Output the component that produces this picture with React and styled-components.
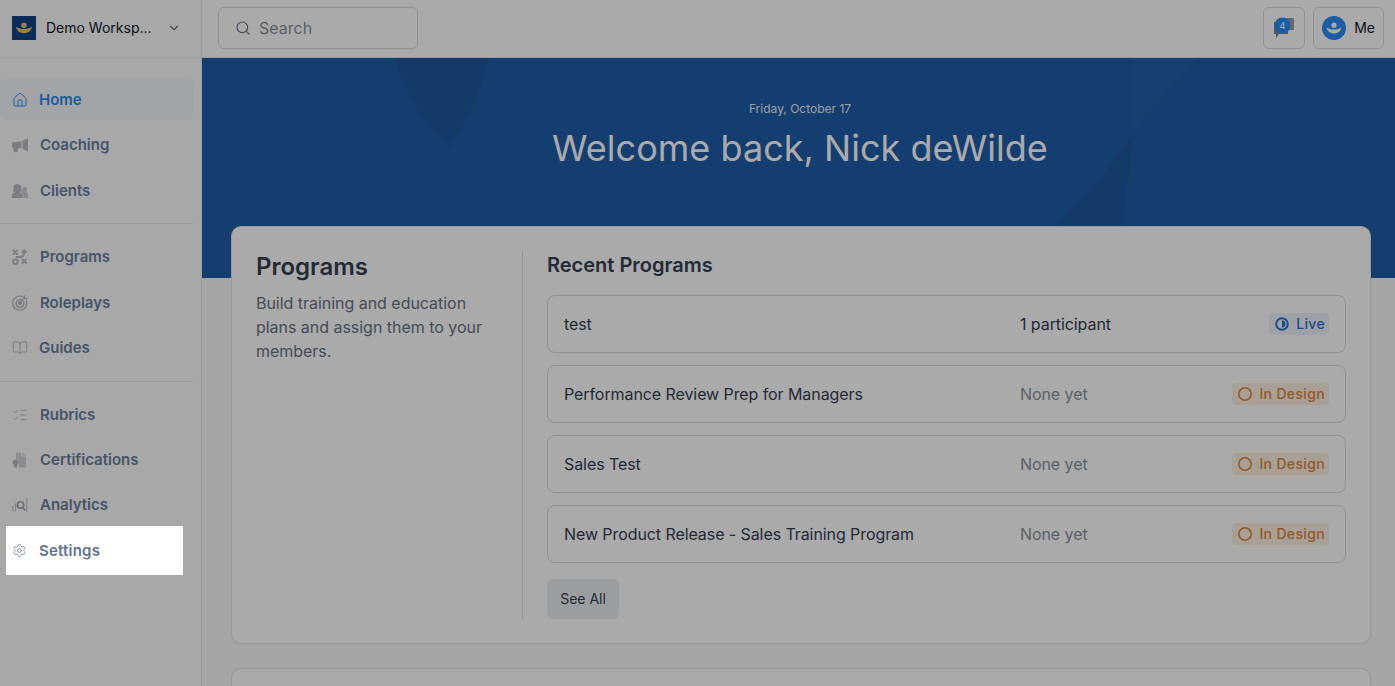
import styled, { createGlobalStyle } from "styled-components"
import { House, ChevronDown, Search, BookOpen, ListChecks, Settings } from "lucide-react"

const Global = createGlobalStyle`
    html, body { margin:0; padding:0; height:100%; overflow:hidden; background:#f9fafb; }
    body { font-family:"Inter","Liberation Sans",sans-serif; }
    * { box-sizing:border-box; }
`

const Page = styled.div`
    display:flex;
    width:100%;
    height:100vh;
    overflow:hidden;
`

const Sidebar = styled.aside`
    width:202px;
    flex-shrink:0;
    background:#fcfcfc;
    border-right:1px solid #e5e7eb;
    display:flex;
    flex-direction:column;
`

const Workspace = styled.div`
    height:58px;
    flex-shrink:0;
    border-bottom:1px solid #e5e7eb;
    display:flex;
    align-items:center;
    padding:0 20px 2px 12px;
    gap:10px;
    font-size:14px;
    font-weight:400;
    color:#111827;
    span { flex:1; }
    svg.chev { color:#6b7280; }
`

const Nav = styled.nav`
    display:flex;
    flex-direction:column;
    padding-top:19px;
    width:193px;
`

const Group = styled.div`
    display:flex;
    flex-direction:column;
`

const Divider = styled.div`
    height:1px;
    background:#e2e4e8;
    margin:11px 0 ${props => props.$short ? "10px" : "11px"};
`

const NavItem = styled.div`
    height:45px;
    display:flex;
    align-items:center;
    padding-left:12px;
    padding-top:${props => props.$nudge > 0 ? props.$nudge : 0}px;
    padding-bottom:${props => props.$nudge < 0 ? -props.$nudge : 0}px;
    gap:${props => props.$tight ? "11px" : "12px"};
    font-size:15px;
    font-weight:600;
    color:${props => props.$active ? "#278cf0" : "#6a7f9e"};
    position:relative;
    svg { flex-shrink:0; color:${props => props.$active ? "#278cf0" : "#b9bcc0"}; }
    ${props => props.$active && `
        isolation:isolate;
        &::before {
            content:"";
            position:absolute;
            inset:2px 0;
            background:#f5f6f8;
            border-radius:6px;
            z-index:-1;
        }
    `}
`

const SpotlightItem = styled(NavItem)`
    z-index:10;
    margin-top:1px;
    color:#5f7492;
    letter-spacing:0.2px;
    svg { color:#8792a5; }
    &::before {
        content:"";
        position:absolute;
        left:6px;
        right:10px;
        top:-2px;
        bottom:-2px;
        background:#fff;
        box-shadow:0 0 0 3000px rgba(0,0,0,0.333);
        z-index:-1;
    }
`

const Main = styled.main`
    flex:1;
    min-width:0;
    display:flex;
    flex-direction:column;
    overflow:hidden;
    position:relative;
    z-index:0;
`

const Topbar = styled.header`
    height:58px;
    flex-shrink:0;
    background:#fff;
    border-bottom:1px solid #e5e7eb;
    display:flex;
    align-items:center;
    justify-content:space-between;
    padding:0 11px 2px 16px;
`

const SearchBox = styled.div`
    width:200px;
    height:42px;
    border:1px solid #d9dce1;
    border-radius:6px;
    display:flex;
    align-items:center;
    gap:8px;
    padding-left:16px;
    font-size:16px;
    color:#8b919a;
    background:#fff;
    svg { color:#6b7280; }
`

const TopActions = styled.div`
    display:flex;
    gap:8px;
`

const TopButton = styled.div`
    height:42px;
    min-width:42px;
    border:1px solid #d9dce1;
    border-radius:6px;
    display:flex;
    align-items:center;
    justify-content:center;
    gap:8px;
    padding:0 8px;
    font-size:14px;
    font-weight:400;
    color:#111827;
`

const Banner = styled.section`
    height:220px;
    flex-shrink:0;
    background:#1f5ca8;
    position:relative;
    display:flex;
    flex-direction:column;
    align-items:center;
    color:#fff;
    padding:43px 0 0 3px;
`

const BannerArt = styled.svg`
    position:absolute;
    inset:0;
    width:100%;
    height:100%;
`

const DateLine = styled.div`
    position:relative;
    font-size:12px;
    line-height:16px;
    color:#e8edf4;
`

const Title = styled.h1`
    position:relative;
    margin:7px 0 0;
    font-size:36px;
    line-height:48px;
    font-weight:400;
    letter-spacing:0.03px;
`

const Content = styled.div`
    margin-top:-52px;
    padding:0 24px 0 29px;
    display:flex;
    flex-direction:column;
    gap:24px;
    position:relative;
`

const Card = styled.section`
    background:#fff;
    border:1px solid #e2e4e8;
    border-radius:10px;
    box-shadow:0 1px 2px rgba(0,0,0,0.05);
    display:flex;
    padding:24px;
    min-height:${props => props.$empty ? "100px" : "418px"};
`

const Intro = styled.div`
    width:267px;
    flex-shrink:0;
    border-right:1px solid #e2e4e8;
    padding-right:24px;
    h2 {
        margin:0 0 8px;
        font-size:24px;
        line-height:32px;
        font-weight:600;
        color:#374151;
    }
    p {
        margin:0;
        font-size:16px;
        line-height:24px;
        letter-spacing:-0.03px;
        color:#6b7280;
    }
`

const Recent = styled.div`
    flex:1;
    padding-left:24px;
    display:flex;
    flex-direction:column;
    align-items:flex-start;
    h3 {
        margin:0 0 16px;
        font-size:20px;
        line-height:28px;
        font-weight:600;
        color:#374151;
    }
`

const Rows = styled.div`
    width:100%;
    display:flex;
    flex-direction:column;
    gap:12px;
`

const Row = styled.div`
    height:58px;
    border:1px solid #d9dce1;
    border-radius:8px;
    display:grid;
    grid-template-columns:456px 1fr auto;
    align-items:center;
    padding:0 16px;
    font-size:16px;
    letter-spacing:-0.08px;
    color:#374151;
`

const Participants = styled.div`
    color:${props => props.$none ? "#8b919a" : "#374151"};
`

const Badge = styled.div`
    height:22px;
    display:flex;
    align-items:center;
    gap:7px;
    padding:0 4px 1px 6px;
    border-radius:4px;
    font-size:14px;
    font-weight:500;
    letter-spacing:0.35px;
    color:${props => props.$live ? "#2a70c8" : "#d9873c"};
    background:${props => props.$live ? "#edf4fd" : "#fdf0e2"};
`

const SeeAll = styled.button`
    margin-top:16px;
    height:40px;
    width:72px;
    border:none;
    border-radius:6px;
    padding:0 0 2px;
    background:#eaecef;
    font-family:inherit;
    font-size:14px;
    color:#374151;
`

const Logo = () => (
    <svg width="24" height="24" viewBox="0 0 24 24">
        <rect width="24" height="24" fill="#114287" />
        <circle cx="12" cy="9.200" r="2.700" fill="#e5c76f" />
        <path d="M4 10.800c2.300 1.500 4.900 2.200 8 2.200s5.700-.7 8-2.200c-.7 4-3.900 6.400-8 6.400s-7.300-2.400-8-6.400z" fill="#e5c76f" />
    </svg>
)

const Avatar = () => (
    <svg width="24" height="24" viewBox="0 0 24 24">
        <circle cx="12" cy="12" r="12" fill="#278cf0" />
        <circle cx="12" cy="9.200" r="2.600" fill="#fff" />
        <path d="M4.500 11.400c2.200 1.400 4.600 2 7.500 2s5.300-.6 7.500-2c-.7 3.800-3.700 6-7.500 6s-6.800-2.200-7.500-6z" fill="#fff" />
    </svg>
)

const ChatIcon = () => (
    <svg width="24" height="24" viewBox="0 0 24 24">
        <path d="M8 2h14v12h-3l-1 0H8z" fill="#9a9fa7" />
        <path d="M2 6h14v12H7l-3 4v-4H2z" fill="#7f858e" />
        <circle cx="10.500" cy="9.500" r="8" fill="#278cf0" />
        <text x="10.500" y="12.500" fontSize="9" fill="#fff" textAnchor="middle" fontFamily="Inter">4</text>
    </svg>
)

const CoachingIcon = () => (
    <svg width="16" height="16" viewBox="0 0 16 16" fill="currentColor">
        <path d="M0 5.200l9.500-1v7.400L6 11v1.800a2.200 2.200 0 0 1-4.400.4l-.2-2.400L0 10.300z" />
        <path d="M10.500 4l4.700-2.500h.8v12.800h-.8L10.500 11.800z" />
    </svg>
)

const ClientsIcon = () => (
    <svg width="16" height="16" viewBox="0 0 16 16" fill="currentColor">
        <path d="M5.500 1c2.400 0 3.700 1.700 3.700 3.800 0 1.500.3 2.500.8 3.200l-2 1v.7c1.300.3 2.300 1 2.700 2.100V15H0v-3.200c.4-1.100 1.400-1.800 2.700-2.100V9l-2-1c.5-.7.8-1.700.8-3.200C1.500 2.700 3.100 1 5.500 1z" />
        <path d="M12.500 3.800c1.500 0 2.500 1.100 2.500 2.600 0 1-.4 1.800-1 2.400v.7c1 .3 1.700.7 2 1.500V15h-4.600v-3.600c-.4-.7-1-1.200-1.800-1.600V8.600c.5-.7.900-1.400 1-2.300.2-1.500.9-2.500 1.900-2.500z" opacity="0.750" />
    </svg>
)

const ProgramsIcon = () => (
    <svg width="16" height="16" viewBox="0 0 16 16" fill="none" stroke="currentColor" strokeWidth="1.800" strokeLinecap="round" strokeLinejoin="round">
        <path d="M1.500 1.500l3.500 3.500M5 1.500L1.500 5" />
        <path d="M10.500 10.500l3.500 3.500M14 10.500L10.500 14" />
        <circle cx="3.300" cy="12.700" r="2.300" />
        <path d="M4.500 8h4c2.500 0 3.800-2 3.800-6M10.500 3.200l1.800-2 1.900 2" />
    </svg>
)

const RoleplaysIcon = () => (
    <svg width="16" height="16" viewBox="0 0 16 16" fill="none" stroke="currentColor" strokeWidth="1.300" strokeLinecap="round">
        <path d="M12 2.600A7 7 0 1 0 14.400 6" />
        <path d="M9.800 4.900A3.900 3.900 0 1 0 11.800 7.200" strokeWidth="1.500" />
        <circle cx="8" cy="8" r="1.300" fill="currentColor" />
        <path d="M8 8l5-5M12.500 1v2.500H15" />
    </svg>
)

const CertIcon = () => (
    <svg width="16" height="16" viewBox="0 0 16 16" fill="currentColor">
        <path d="M4 0.500h5v4h5v11H6.500V11c1-.7 1-3.500-2.500-3.500H4z" opacity="0.650" />
        <path d="M10 0.500l4 3h-4z" opacity="0.650" />
        <circle cx="3.500" cy="10.500" r="3" />
        <path d="M2 13h3v2.500H2z" />
    </svg>
)

const AnalyticsIcon = () => (
    <svg width="16" height="16" viewBox="0 0 16 16" fill="none" stroke="currentColor" strokeWidth="1">
        <path d="M0.700 9v5.500M3.500 6.500v8" />
        <circle cx="8.500" cy="8" r="3.200" strokeWidth="1.600" stroke="#9da1a7" />
        <path d="M11 10.500l2.300 3" strokeWidth="1.600" stroke="#9da1a7" />
        <path d="M14.800 1v13.500" />
    </svg>
)

const LiveIcon = () => (
    <svg width="14" height="14" viewBox="0 0 14 14">
        <circle cx="7" cy="7" r="5.800" fill="none" stroke="currentColor" strokeWidth="2" />
        <path d="M7 3.600a3.400 3.400 0 0 1 0 6.800z" fill="currentColor" />
    </svg>
)

const DesignIcon = () => (
    <svg width="14" height="14" viewBox="0 0 14 14">
        <circle cx="7" cy="7" r="6.200" fill="none" stroke="currentColor" strokeWidth="1.600" />
    </svg>
)

const programs = [
    { name: "test", people: "1 participant", live: true },
    { name: "Performance Review Prep for Managers", people: "None yet" },
    { name: "Sales Test", people: "None yet" },
    { name: "New Product Release - Sales Training Program", people: "None yet" },
]

export default function App() {
    return (
        <Page>
            <Global />
            <Sidebar>
                <Workspace>
                    <Logo />
                    <span>Demo Worksp...</span>
                    <ChevronDown className="chev" size={14} />
                </Workspace>
                <Nav>
                    <Group>
                        <NavItem $active $tight><House size={16} strokeWidth={1.5} />Home</NavItem>
                        <NavItem><CoachingIcon />Coaching</NavItem>
                        <NavItem $nudge={2}><ClientsIcon />Clients</NavItem>
                    </Group>
                    <Divider />
                    <Group>
                        <NavItem $nudge={-2}><ProgramsIcon />Programs</NavItem>
                        <NavItem><RoleplaysIcon />Roleplays</NavItem>
                        <NavItem $tight><BookOpen size={16} strokeWidth={1.5} />Guides</NavItem>
                    </Group>
                    <Divider $short />
                    <Group>
                        <NavItem><ListChecks size={16} strokeWidth={1.5} />Rubrics</NavItem>
                        <NavItem><CertIcon />Certifications</NavItem>
                        <NavItem><AnalyticsIcon />Analytics</NavItem>
                        <SpotlightItem><Settings size={15} strokeWidth={1.5} />Settings</SpotlightItem>
                    </Group>
                </Nav>
            </Sidebar>
            <Main>
                <Topbar>
                    <SearchBox><Search size={16} strokeWidth={1.8} />Search</SearchBox>
                    <TopActions>
                        <TopButton><ChatIcon /></TopButton>
                        <TopButton><Avatar />Me</TopButton>
                    </TopActions>
                </Topbar>
                <Banner>
                    <BannerArt viewBox="0 0 1193 220" preserveAspectRatio="none">
                        <path d="M193 0H287Q275 50 247 90Q205 50 193 0z" fill="#21589d" />
                        <path d="M247 90L347 167H182Q220 130 247 90z" fill="#1f5eaa" />
                        <path d="M931 0H996L931 72z" fill="#2160a8" />
                        <path d="M931 77L921 167H855Q900 120 931 77z" fill="#21589d" />
                    </BannerArt>
                    <DateLine>Friday, October 17</DateLine>
                    <Title>Welcome back, Nick deWilde</Title>
                </Banner>
                <Content>
                    <Card>
                        <Intro>
                            <h2>Programs</h2>
                            <p>Build training and education plans and assign them to your members.</p>
                        </Intro>
                        <Recent>
                            <h3>Recent Programs</h3>
                            <Rows>
                                {programs.map((item) =>
                                    <Row key={item.name}>
                                        <div>{item.name}</div>
                                        <Participants $none={!item.live}>{item.people}</Participants>
                                        <Badge $live={item.live}>
                                            {item.live ? <LiveIcon /> : <DesignIcon />}
                                            {item.live ? "Live" : "In Design"}
                                        </Badge>
                                    </Row>
                                )}
                            </Rows>
                            <SeeAll>See All</SeeAll>
                        </Recent>
                    </Card>
                    <Card $empty />
                </Content>
            </Main>
        </Page>
    )
}
